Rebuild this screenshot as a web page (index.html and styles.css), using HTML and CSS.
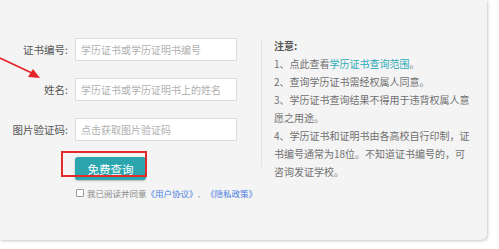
FILE: index.html
```html
<!DOCTYPE html>
<html lang="zh-CN">
<head>
<meta charset="utf-8">
<link rel="stylesheet" href="styles.css">
</head>
<body>
<div class="card">
  <svg class="arrow" width="50" height="30" viewBox="0 0 50 30">
    <line x1="0" y1="6" x2="34" y2="22" stroke="#e4262b" stroke-width="1.6"/>
    <polygon points="40,26 28,25 33,17" fill="#e4262b"/>
  </svg>
  <div class="form">
    <div class="row">
      <span class="label">证书编号:</span>
      <span class="input">学历证书或学历证明书编号</span>
    </div>
    <div class="row">
      <span class="label">姓名:</span>
      <span class="input">学历证书或学历证明书上的姓名</span>
    </div>
    <div class="row">
      <span class="label">图片验证码:</span>
      <span class="input">点击获取图片验证码</span>
    </div>
    <div class="btn-wrap">
      <button class="btn">免费查询</button>
      <span class="highlight"></span>
    </div>
    <div class="agree">
      <span class="check"></span>
      <span>我已阅读并同意</span><span class="blue">《用户协议》</span><span>、</span><span class="blue">《隐私政策》</span>
    </div>
  </div>
  <div class="divider"></div>
  <div class="notes">
    <p class="title">注意:</p>
    <p>1、点此查看<span class="link">学历证书查询范围</span>。</p>
    <p>2、查询学历证书需经权属人同意。</p>
    <p>3、学历证书查询结果不得用于违背权属人意<br>愿之用途。</p>
    <p>4、学历证书和证明书由各高校自行印制，证<br>书编号通常为18位。不知道证书编号的，可<br>咨询发证学校。</p>
  </div>
</div>
</body>
</html>
```

FILE: styles.css
```css
html, body {
  margin: 0;
  padding: 0;
  background: #ffffff;
}
body {
  font-family: "Noto Sans CJK SC", "Liberation Sans", sans-serif;
  width: 499px;
  height: 249px;
  overflow: hidden;
}
.card {
  position: relative;
  width: 487px;
  height: 240px;
  background: #f4f4f4;
  box-shadow: 1px 1px 3px rgba(0,0,0,0.22);
  border-radius: 0 0 6px 0;
  display: flex;
  align-items: flex-start;
}
.arrow {
  position: absolute;
  left: 0;
  top: 52px;
}
.form {
  width: 261px;
  padding-top: 38px;
  box-sizing: border-box;
}
.row {
  display: flex;
  align-items: center;
  height: 23px;
  margin-bottom: 17px;
}
.label {
  width: 68px;
  padding-right: 7px;
  text-align: right;
  font-size: 10.5px;
  color: #555;
  box-sizing: content-box;
}
.input {
  width: 162px;
  height: 23px;
  box-sizing: border-box;
  border: 1px solid #dcdcdc;
  background: #fff;
  padding-left: 5px;
  font-size: 10px;
  line-height: 21px;
  color: #b0b0b0;
  white-space: nowrap;
}
.btn-wrap {
  position: relative;
  margin-left: 75px;
  margin-top: -1px;
  width: 71px;
  height: 23px;
}
.btn {
  display: block;
  width: 71px;
  height: 23px;
  border: none;
  border-radius: 3px;
  background: #2ba5ae;
  color: #fff;
  font-family: "Noto Sans CJK SC", sans-serif;
  font-size: 11.5px;
  padding: 0;
  box-shadow: 0 1px 2px rgba(0,0,0,0.25);
}
.highlight {
  position: absolute;
  left: -14px;
  top: -6px;
  width: 82px;
  height: 22px;
  border: 2px solid #e32b2b;
}
.agree {
  display: flex;
  align-items: center;
  margin-top: 8px;
  margin-left: 76px;
  font-size: 8.5px;
  color: #888;
  white-space: nowrap;
  height: 9px;
}
.check {
  width: 6px;
  height: 6px;
  border: 1px solid #999;
  border-radius: 1px;
  background: #fff;
  margin-right: 3px;
}
.blue {
  color: #4a7fe0;
}
.divider {
  width: 1px;
  height: 127px;
  margin-top: 40px;
  background: #e2e2e2;
}
.notes {
  width: 204px;
  padding-left: 12px;
  margin-top: 37px;
  font-size: 10px;
  line-height: 18px;
  color: #707070;
  white-space: nowrap;
}
.notes p {
  margin: 0;
}
.notes .title {
  font-weight: bold;
  color: #555;
}
.link {
  color: #2aa9b9;
}
```
